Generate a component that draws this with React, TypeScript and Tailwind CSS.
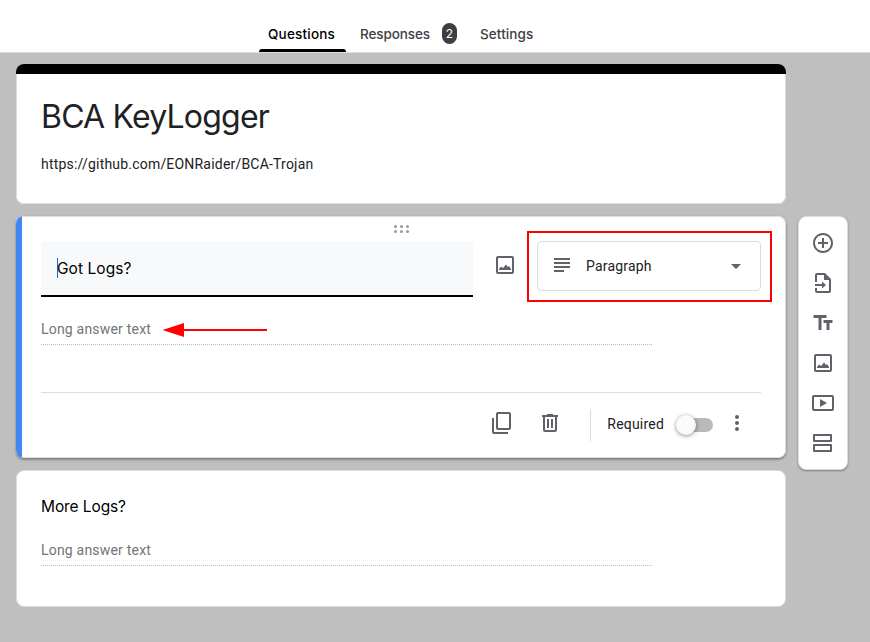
import React from "react";

const googleSans = "font-['Google_Sans',Inter,sans-serif]";

function Icon({ children, className = "" }: { children: React.ReactNode; className?: string }) {
  return (
    <svg viewBox="0 0 24 24" className={`block size-6 shrink-0 fill-[#5f6368] ${className}`}>
      {children}
    </svg>
  );
}

function ImageIcon() {
  return (
    <Icon>
      <path fillRule="evenodd" d="M5 3h14a2 2 0 0 1 2 2v14a2 2 0 0 1-2 2H5a2 2 0 0 1-2-2V5c0-1.100.9-2 2-2zm0 2v14h14V5z" />
      <path d="M6 17v-1l2-2.500 2 1.500 3-3.500 2 2.500 1-1 2 3v1z" />
    </Icon>
  );
}

function AddIcon() {
  return (
    <Icon>
      <path d="M13 7h-2v4H7v2h4v4h2v-4h4v-2h-4V7zm-1-5C6.480 2 2 6.480 2 12s4.480 10 10 10 10-4.480 10-10S17.520 2 12 2zm0 18c-4.410 0-8-3.590-8-8s3.590-8 8-8 8 3.590 8 8-3.590 8-8 8z" />
    </Icon>
  );
}

function ImportIcon() {
  return (
    <Icon>
      <path d="M14 2H6a2 2 0 0 0-2 2v7h2V4h7v5h5v11H6v-3H4v3a2 2 0 0 0 2 2h12a2 2 0 0 0 2-2V8z" />
      <path d="M4 13h7v-2.500l4 3.500-4 3.500V15H4z" />
    </Icon>
  );
}

function TextIcon() {
  return (
    <Icon>
      <path d="M2.500 4v3h5v12h3V7h5V4h-13zM21.500 9h-9v3h3v7h3v-7h3V9z" />
    </Icon>
  );
}

function VideoIcon() {
  return (
    <Icon>
      <path fillRule="evenodd" d="M3 4h18a2 2 0 0 1 2 2v12a2 2 0 0 1-2 2H3a2 2 0 0 1-2-2V6c0-1.100.9-2 2-2zm0 2v12h18V6z" />
      <path d="M9 8v8l7-4z" />
    </Icon>
  );
}

function SectionIcon() {
  return (
    <Icon>
      <path fillRule="evenodd" d="M3 3h17a1 1 0 0 1 1 1v6a1 1 0 0 1-1 1H3a1 1 0 0 1-1-1V4a1 1 0 0 1 1-1zm1 2v4h15V5zM3 13h17a1 1 0 0 1 1 1v6a1 1 0 0 1-1 1H3a1 1 0 0 1-1-1v-6a1 1 0 0 1 1-1zm1 2v4h15v-4z" />
    </Icon>
  );
}

function CopyIcon() {
  return (
    <Icon>
      <path fillRule="evenodd" d="M8 1h11a2 2 0 0 1 2 2v14a2 2 0 0 1-2 2H8a2 2 0 0 1-2-2V3c0-1.100.9-2 2-2zm0 2v14h11V3z" />
      <path d="M4 7H2v14a2 2 0 0 0 2 2h14v-2H4z" />
    </Icon>
  );
}

function TrashIcon() {
  return (
    <Icon>
      <path d="M15 4V3H9v1H4v2h1v13a2 2 0 0 0 2 2h10a2 2 0 0 0 2-2V6h1V4h-5zm2 15H7V6h10v13zM9 8h2v9H9zm4 0h2v9h-2z" />
    </Icon>
  );
}

function MoreIcon() {
  return (
    <Icon>
      <path d="M12 8a2 2 0 1 0 0-4 2 2 0 0 0 0 4zm0 2a2 2 0 1 0 0 4 2 2 0 0 0 0-4zm0 6a2 2 0 1 0 0 4 2 2 0 0 0 0-4z" />
    </Icon>
  );
}

function DragDots() {
  return (
    <div className="grid grid-cols-3 content-start gap-x-[3px] gap-y-[2px]">
      {[0, 1, 2, 3, 4, 5].map((n) => (
        <span key={n} className="size-[3px] rounded-full bg-[#9b9b9b]" />
      ))}
    </div>
  );
}

function LongAnswer() {
  return (
    <div className="h-[26px] w-[611px] border-b border-dotted border-[#bdbdbd] text-sm leading-5 tracking-[0.2px] text-[#70757a]">
      Long answer text
    </div>
  );
}

function Header() {
  return (
    <header className={`flex h-[53px] items-end border-b border-[#dadce0] bg-white pl-[259px] text-sm font-medium text-[#3c4043] ${googleSans}`}>
      <div className="flex h-[37px] w-[87px] flex-col justify-between text-black">
        <span className="pt-[9px] pl-[9px] text-[13.500px] leading-5 tracking-[0.2px]">Questions</span>
        <span className="h-[3px] rounded-t-[3px] bg-black" />
      </div>
      <div className="flex h-[37px] items-start pt-[9px] pl-[14px]">
        <span className="w-[82px] text-[13.500px] leading-5 tracking-[-0.100px]">Responses</span>
        <span className="-mt-px flex h-[21px] w-[15px] items-center justify-center rounded-full bg-[#3c4043] pt-px text-xs font-normal text-white">2</span>
        <span className="pl-[23px] text-[13.500px] leading-5 tracking-[0.1px]">Settings</span>
      </div>
    </header>
  );
}

function TitleCard() {
  return (
    <section className="flex h-[140px] flex-col overflow-hidden rounded-lg bg-white">
      <div className="h-[10px] shrink-0 bg-black" />
      <div className="flex-1 rounded-b-lg border border-t-0 border-[#dadce0] pl-6">
        <h1 className={`pt-[23px] text-[32px] leading-10 tracking-[-0.800px] text-[#202124] ${googleSans}`}>BCA KeyLogger</h1>
        <p className="pt-[17px] text-sm leading-5 tracking-[0.2px] text-[#202124]">https://github.com/EONRaider/BCA-Trojan</p>
      </div>
    </section>
  );
}

function QuestionCard() {
  return (
    <section className="flex h-[242px] overflow-hidden rounded-lg bg-white shadow-[0_2px_2px_rgba(0,0,0,0.2),0_1px_3px_rgba(0,0,0,0.22)]">
      <div className="w-[6px] shrink-0 bg-[#4285f4]" />
      <div className="relative min-w-0 flex-1 rounded-r-lg border border-l-0 border-[#dadce0] pr-6 pl-[19px]">
        <div className="flex h-[24px] justify-center pt-[8px]">
          <DragDots />
        </div>
        <div className="flex h-14 items-start">
          <div className={`flex h-14 w-[432px] shrink-0 items-center rounded-t border-b-2 border-black bg-[#f8f9fa] pl-4 text-base text-black ${googleSans}`}>
            <span className="-mr-px h-5 w-px bg-[#1967d2]" />
            <span className="pt-px text-[15.500px] tracking-[0.050px]">Got Logs?</span>
          </div>
          <div className="pt-3 pl-5">
            <ImageIcon />
          </div>
          <div className="-mt-[10px] -mr-[11px] ml-[10px] h-[71px] w-[245px] shrink-0 border-2 border-[#f00] p-2">
            <div className="flex h-[50px] w-[224px] items-center rounded border border-[#dadce0] text-sm tracking-[0.2px] text-[#202124]">
              <Icon className="ml-3">
                <path d="M4 4h16v2H4zM4 8h16v2H4zM4 12h16v2H4zM4 16h10v2H4z" />
              </Icon>
              <span className="ml-3 w-[138px]">Paragraph</span>
              <Icon>
                <path d="M7 10l5 5 5-5z" />
              </Icon>
            </div>
          </div>
        </div>
        <div className="pt-[22px]">
          <LongAnswer />
        </div>
        <svg className="absolute top-[105px] left-[140px] h-4 w-[106px]" viewBox="0 0 106 16">
          <path d="M0.500 8 22 1v14z" fill="#f00" />
          <path d="M20 8h85" stroke="#f00" strokeWidth="2" />
        </svg>
        <div className="mt-[47px] flex h-16 items-center justify-end border-t border-[#dadce0]">
          <div className="pb-1">
            <CopyIcon />
          </div>
          <div className="ml-6 pb-1">
            <TrashIcon />
          </div>
          <div className="ml-7 h-8 w-px bg-[#dadce0]" />
          <span className="ml-4 pb-0.5 text-sm tracking-[0.2px] text-[#202124]">Required</span>
          <div className="ml-[15px] flex h-[14px] w-[34px] items-center rounded-full bg-[#b9b9b9]">
            <span className="-ml-[3px] size-5 rounded-full bg-[#fafafa] shadow-[0_1px_4px_rgba(0,0,0,0.45)]" />
          </div>
          <div className="mr-3 ml-3 pb-1">
            <MoreIcon />
          </div>
        </div>
      </div>
    </section>
  );
}

function MoreCard() {
  return (
    <section className="h-[137px] rounded-lg border border-[#dadce0] bg-white pl-6">
      <h2 className={`pt-6 text-[15.500px] leading-6 tracking-[-0.100px] text-black ${googleSans}`}>More Logs?</h2>
      <div className="pt-[21px]">
        <LongAnswer />
      </div>
    </section>
  );
}

function Toolbar() {
  return (
    <aside className="mt-[152px] flex h-[254px] w-[50px] flex-col items-center gap-4 rounded-lg border border-[#dadce0] bg-white pt-[14px] shadow-[0_1px_2px_rgba(0,0,0,0.35)]">
      <AddIcon />
      <ImportIcon />
      <TextIcon />
      <ImageIcon />
      <VideoIcon />
      <SectionIcon />
    </aside>
  );
}

export default function App() {
  return (
    <div className="h-[642px] w-[870px] overflow-hidden bg-[#bfbfbf] font-[Roboto,sans-serif]">
      <Header />
      <main className="flex items-start gap-3 pt-[11px] pl-4">
        <div className="flex w-[770px] flex-col gap-3">
          <TitleCard />
          <QuestionCard />
          <MoreCard />
        </div>
        <Toolbar />
      </main>
    </div>
  );
}
